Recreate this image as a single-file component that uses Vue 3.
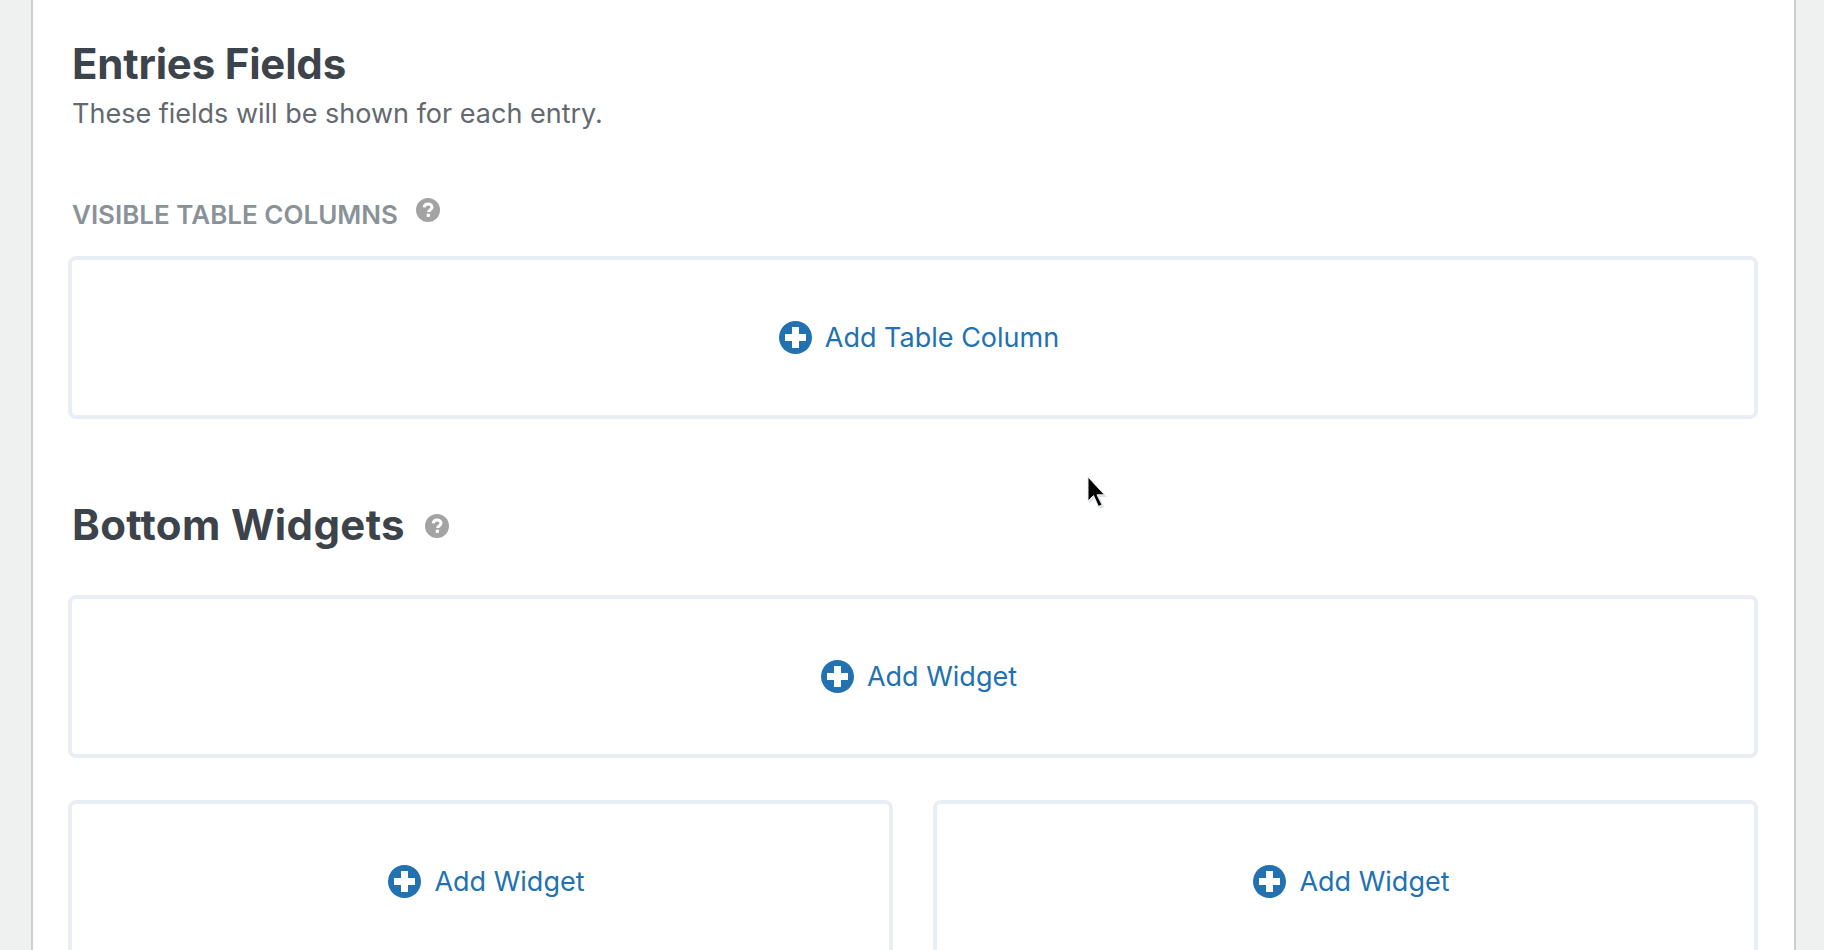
<template>
  <div class="page">
    <div class="panel">
      <div class="section-head entries-head">
        <h2 class="section-title">Entries Fields</h2>
        <p class="section-desc">These fields will be shown for each entry.</p>
      </div>

      <div class="field-label">
        <span>VISIBLE TABLE COLUMNS</span>
        <svg class="help label-help" viewBox="0 0 24 24">
          <circle cx="12" cy="12" r="12" fill="#a3a3a3" />
          <path d="M8.2 9.4c.2-2.2 1.8-3.5 3.9-3.5 2.2 0 3.9 1.3 3.9 3.3 0 2.700-3.400 2.800-3.400 4.800" fill="none" stroke="#fff" stroke-width="3" />
          <rect x="10.700" y="15.700" width="3.200" height="3.200" fill="#fff" />
        </svg>
      </div>

      <div class="drop-box">
        <a class="add-link">
          <svg class="plus" viewBox="0 0 33 33">
            <circle cx="16.500" cy="16.500" r="16.500" fill="#2271b1" />
            <path d="M13 6h7v7h7v7h-7v7h-7v-7H6v-7h7z" fill="#fff" />
          </svg>
          <span>Add Table Column</span>
        </a>
      </div>

      <div class="widgets-head">
        <h2 class="section-title wide">Bottom Widgets</h2>
        <svg class="help title-help" viewBox="0 0 24 24">
          <circle cx="12" cy="12" r="12" fill="#a3a3a3" />
          <path d="M8.2 9.4c.2-2.2 1.8-3.5 3.9-3.5 2.2 0 3.9 1.3 3.9 3.3 0 2.700-3.400 2.800-3.400 4.800" fill="none" stroke="#fff" stroke-width="3" />
          <rect x="10.700" y="15.700" width="3.200" height="3.200" fill="#fff" />
        </svg>
      </div>

      <div class="drop-box">
        <a class="add-link">
          <svg class="plus" viewBox="0 0 33 33">
            <circle cx="16.500" cy="16.500" r="16.500" fill="#2271b1" />
            <path d="M13 6h7v7h7v7h-7v7h-7v-7H6v-7h7z" fill="#fff" />
          </svg>
          <span>Add Widget</span>
        </a>
      </div>

      <div class="widget-row">
        <div v-for="n in 2" :key="n" class="drop-box">
          <a class="add-link">
            <svg class="plus" viewBox="0 0 33 33">
              <circle cx="16.500" cy="16.500" r="16.500" fill="#2271b1" />
              <path d="M13 6h7v7h7v7h-7v7h-7v-7H6v-7h7z" fill="#fff" />
            </svg>
            <span>Add Widget</span>
          </a>
        </div>
      </div>
    </div>

    <!-- mouse pointer caught in the recording, with its blurred trail -->
    <svg class="cursor" viewBox="0 0 24 36">
      <path d="M2 3v25l6-6 5 11 4-2-5-10h8z" fill="#dfe3e6" />
      <path d="M1 1v24l5.500-5.500 5 11 3.500-1.700-5-10h7.500z" fill="#000" stroke="#e9edef" stroke-width="1" />
    </svg>
  </div>
</template>

<script setup>
</script>

<style>
html,
body {
  margin: 0;
  background: #eff1f0;
}
</style>

<style scoped>
.page {
  position: relative;
  height: 950px;
  overflow: hidden;
  padding: 0 28px 0 31px;
  background: #eff1f0;
  font-family: Inter, "Liberation Sans", sans-serif;
}

.panel {
  height: 950px;
  box-sizing: border-box;
  padding: 0 36px 0 35px;
  background: #fff;
  border-left: 2px solid #c9ced3;
  border-right: 2px solid #c9ced3;
}

.section-head {
  padding-left: 4px;
}

.entries-head {
  padding-top: 40px;
}

.section-title {
  margin: 0;
  font-size: 42px;
  line-height: 48px;
  font-weight: 700;
  letter-spacing: -0.2px;
  color: #3c434a;
}

.section-title.wide {
  letter-spacing: 0.35px;
}

.section-desc {
  margin: 10px 0 0;
  font-size: 27px;
  line-height: 32px;
  color: #646970;
}

.field-label {
  display: flex;
  align-items: flex-start;
  gap: 18px;
  margin-top: 70px;
  padding-left: 4px;
  height: 56px;
  font-size: 26px;
  line-height: 30px;
  font-weight: 600;
  color: #8a9299;
}

.label-help {
  margin-top: -2px;
}

.title-help {
  margin-top: 2px;
}

.help {
  width: 24px;
  height: 24px;
  flex: none;
}

.drop-box {
  display: flex;
  align-items: center;
  justify-content: center;
  height: 163px;
  box-sizing: border-box;
  border: 4px solid #e8eef3;
  border-radius: 8px;
  background: #fff;
}

.add-link {
  display: flex;
  align-items: center;
  gap: 13px;
  padding-left: 12px;
  font-size: 27px;
  line-height: 33px;
  color: #2271b1;
}

.plus {
  width: 33px;
  height: 33px;
  flex: none;
}

.widgets-head {
  display: flex;
  align-items: center;
  gap: 20px;
  height: 48px;
  margin: 82px 0 46px;
  padding-left: 4px;
}

.widget-row {
  display: grid;
  grid-template-columns: 1fr 1fr;
  gap: 40px;
  margin-top: 42px;
}

.cursor {
  position: absolute;
  left: 1087px;
  top: 476px;
  width: 24px;
  height: 36px;
}
</style>
